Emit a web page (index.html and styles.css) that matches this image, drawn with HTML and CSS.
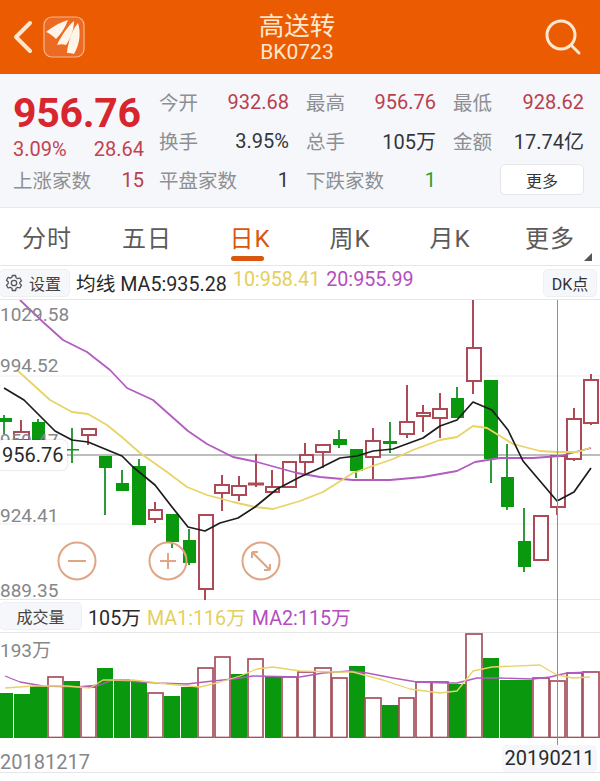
FILE: index.html
```html
<!DOCTYPE html>
<html lang="zh-CN">
<head>
    <meta charset="UTF-8">
    <meta name="viewport" content="width=device-width, initial-scale=1.0">
    <title>高送转 BK0723</title>
    <link rel="stylesheet" href="styles.css">
</head>
<body>
    <header class="topbar">
        <div class="topbar-left">
            <svg class="back-icon" width="22" height="34" viewBox="0 0 22 34">
                <path d="M18 3 L4 17 L18 31" fill="none" stroke="#fde7cf" stroke-width="4" stroke-linecap="round" stroke-linejoin="round"/>
            </svg>
            <svg class="logo-icon" width="42" height="42" viewBox="0 0 42 42">
                <rect x="1" y="1" width="40" height="40" rx="8" fill="#ec6a22" stroke="#f8b78c" stroke-width="1.2"/>
                <path d="M3 16 C10 10 18 6 25 4 C22 12 18 18 13 23 C10 20 6 17 3 16 Z" fill="#fff4e8"/>
                <path d="M14 29 C18 20 25 10 31 5 C31 14 28 22 23 29 C20 28 17 28 14 29 Z" fill="#fff4e8"/>
                <path d="M24 37 C25 26 29 14 35 7 C38 16 37 28 31 38 C29 37 26 37 24 37 Z" fill="#fff4e8"/>
            </svg>
        </div>
        <div class="topbar-title">
            <div class="title-name">高送转</div>
            <div class="title-code">BK0723</div>
        </div>
        <svg class="search-icon" width="38" height="38" viewBox="0 0 38 38">
            <circle cx="17" cy="17" r="14" fill="none" stroke="#fde7cf" stroke-width="3"/>
            <path d="M27 27 L35 35" stroke="#fde7cf" stroke-width="3" stroke-linecap="round"/>
        </svg>
    </header>

    <section class="stats">
        <div class="price-block">
            <div class="price">956.76</div>
            <div class="price-change">
                <span>3.09%</span>
                <span>28.64</span>
            </div>
            <div class="stat"><span class="label">上涨家数</span><span class="value red">15</span></div>
        </div>
        <div class="stat-grid">
            <div class="stat"><span class="label">今开</span><span class="value red">932.68</span></div>
            <div class="stat"><span class="label">最高</span><span class="value red">956.76</span></div>
            <div class="stat"><span class="label">最低</span><span class="value red">928.62</span></div>
            <div class="stat"><span class="label">换手</span><span class="value">3.95%</span></div>
            <div class="stat"><span class="label">总手</span><span class="value">105万</span></div>
            <div class="stat"><span class="label">金额</span><span class="value">17.74亿</span></div>
            <div class="stat"><span class="label">平盘家数</span><span class="value">1</span></div>
            <div class="stat"><span class="label">下跌家数</span><span class="value green">1</span></div>
            <div class="stat"><button class="more-btn">更多</button></div>
        </div>
    </section>

    <nav class="tabs">
        <div class="tab tab-shift">分时</div>
        <div class="tab tab-shift">五日</div>
        <div class="tab active">日K</div>
        <div class="tab">周K</div>
        <div class="tab">月K</div>
        <div class="tab tab-more">更多</div>
    </nav>

    <div class="ma-row">
        <div class="chip chip-settings">
            <svg width="18" height="18" viewBox="0 0 18 18">
                <path d="M7.4 1.5 h3.2 l.5 2.3 1.5.9 2.3-.7 1.6 2.8-1.7 1.6 v1.2 l1.7 1.6-1.6 2.8-2.3-.7-1.5.9-.5 2.3 H7.4 l-.5-2.3-1.5-.9-2.3.7-1.6-2.8 1.7-1.6 V7.8 L1.5 6.2 l1.6-2.8 2.3.7 1.5-.9 Z" fill="none" stroke="#555" stroke-width="1.3" stroke-linejoin="round"/>
                <circle cx="9" cy="9" r="2.7" fill="none" stroke="#555" stroke-width="1.3"/>
            </svg>
            设置
        </div>
        <div class="ma-values">
            <span class="dark">均线 MA5:935.28</span>
            <span class="yellow">10:958.41</span>
            <span class="purple">20:955.99</span>
        </div>
        <div class="chip chip-dk">DK点</div>
    </div>

    <div class="kline">
        <svg class="kline-svg" width="600" height="300" viewBox="0 300 600 300">
            <g class="grid">
                <path d="M0 376 H600 M0 524 H600"/>
            </g>
            <path class="last-price" d="M0 455 H600"/>

            <g class="candles-down">
                <path class="wick" d="M4 415 V434 M38 419 V440 M72 428 V463 M105 456 V515 M122 470 V491 M139 459 V525 M172 514 V548 M189 529 V565 M339 430 V448 M356 449 V478 M390 422 V453 M457 387 V418 M491 380 V483 M507 444 V510 M524 508 V572"/>
                <rect x="-3" y="418" width="15" height="4"/>
                <rect x="32" y="422" width="13" height="18"/>
                <rect x="65" y="449" width="14" height="1.5"/>
                <rect x="99" y="456" width="13" height="12"/>
                <rect x="116" y="483" width="13" height="8"/>
                <rect x="132" y="466" width="14" height="59"/>
                <rect x="166" y="514" width="13" height="28"/>
                <rect x="183" y="540" width="13" height="23"/>
                <rect x="333" y="439" width="14" height="6"/>
                <rect x="350" y="449" width="13" height="22"/>
                <rect x="383" y="441" width="14" height="3"/>
                <rect x="451" y="398" width="13" height="20"/>
                <rect x="484" y="380" width="14" height="79"/>
                <rect x="501" y="477" width="13" height="30"/>
                <rect x="518" y="541" width="13" height="26"/>
            </g>

            <g class="candles-up">
                <path class="wick" d="M21 420 V440 M88 429 V445 M155 502 V523 M205 515 V600 M222 475 V511 M239 476 V501 M256 454 V487 M272 470 V493 M305 443 V475 M323 445 V468 M373 428 V480 M407 385 V438 M423 405 V432 M440 393 V438 M473 300 V394 M557 456 V515 M574 408 V461 M591 374 V425"/>
                <rect x="14" y="432" width="15" height="8"/>
                <rect x="82" y="429" width="14" height="6"/>
                <rect x="149" y="510" width="13" height="9"/>
                <rect x="199" y="515" width="14" height="74"/>
                <rect x="215" y="485" width="14" height="8"/>
                <rect x="232" y="486" width="14" height="9"/>
                <rect x="249" y="483.5" width="14" height="1"/>
                <rect x="266" y="487" width="13" height="5"/>
                <rect x="283" y="462" width="13" height="25"/>
                <rect x="300" y="455" width="13" height="7"/>
                <rect x="316" y="445" width="14" height="7"/>
                <rect x="366" y="441" width="14" height="16"/>
                <rect x="400" y="422" width="14" height="12"/>
                <rect x="417" y="413" width="13" height="3"/>
                <rect x="433" y="409" width="14" height="9"/>
                <rect x="467" y="348" width="14" height="33"/>
                <rect x="534" y="516" width="14" height="44"/>
                <rect x="551" y="456" width="14" height="51"/>
                <rect x="567" y="419" width="14" height="40"/>
                <rect x="584" y="380" width="14" height="43"/>
            </g>

            <polyline class="line-ma20" points="20,300 43,322 63,340 87,352 110,370 127,388 153,400 188,431 207,444 233,457 257,462 297,473 320,477 353,480 390,480 423,477 457,471 475,462 500,458 533,458 560,456 591,448"/>
            <polyline class="line-ma10" points="17,370 50,400 72,412 88,414 107,425 123,438 140,453 167,472 187,487 207,495 233,502 255,507 273,509 300,501 323,492 353,473 370,467 393,459 413,450 440,440 457,437 473,426 487,428 513,444 540,451 557,452 577,452 590,448"/>
            <polyline class="line-ma5" points="4,388 24,400 55,431 72,440 88,442 122,456 133,467 155,485 172,507 188,527 205,531 220,523 238,518 255,507 277,489 300,477 320,468 340,458 357,456 373,451 393,449 423,438 440,426 457,420 473,402 492,410 508,430 523,461 557,501 574,492 591,468"/>

            <g class="zoom-btn">
                <circle cx="77" cy="561" r="18.5"/>
                <path d="M68 561 H86"/>
                <circle cx="168" cy="561" r="18.5"/>
                <path d="M160 561 H176 M168 553 V569"/>
                <circle cx="261" cy="561" r="18.5"/>
                <path d="M252 552 L270 570 M252 552 h6 M252 552 v6 M270 570 h-6 M270 570 v-6"/>
            </g>
        </svg>
        <span class="axis-label axis-1">1029.58</span>
        <span class="axis-label axis-2">994.52</span>
        <span class="axis-label axis-mid">959.47</span>
        <span class="axis-label axis-3">924.41</span>
        <span class="axis-label axis-4">889.35</span>
        <span class="price-tag">956.76</span>
    </div>

    <div class="vol-row">
        <div class="chip chip-vol">成交量</div>
        <div class="ma-values">
            <span class="dark">105万</span>
            <span class="yellow">MA1:116万</span>
            <span class="purple">MA2:115万</span>
        </div>
    </div>

    <div class="volume">
        <svg class="volume-svg" width="600" height="105" viewBox="0 633 600 105">
            <g class="bars-down">
                <rect x="-1" y="693" width="14" height="45"/>
                <rect x="14" y="694" width="16" height="44"/>
                <rect x="30" y="686" width="17" height="52"/>
                <rect x="64" y="681" width="16" height="57"/>
                <rect x="97" y="668" width="16" height="70"/>
                <rect x="114" y="679" width="16" height="59"/>
                <rect x="131" y="682" width="16" height="56"/>
                <rect x="164" y="696" width="16" height="42"/>
                <rect x="181" y="687" width="16" height="51"/>
                <rect x="231" y="674" width="16" height="64"/>
                <rect x="265" y="677" width="16" height="61"/>
                <rect x="349" y="666" width="16" height="72"/>
                <rect x="382" y="705" width="17" height="33"/>
                <rect x="449" y="684" width="17" height="54"/>
                <rect x="483" y="658" width="16" height="80"/>
                <rect x="500" y="680" width="16" height="58"/>
                <rect x="516" y="680" width="16" height="58"/>
            </g>
            <g class="bars-up">
                <rect x="48" y="677" width="15" height="60.5"/>
                <rect x="81" y="687" width="15" height="50.5"/>
                <rect x="148" y="693" width="15" height="44.5"/>
                <rect x="198" y="668" width="15" height="69.5"/>
                <rect x="215" y="657" width="15" height="80.5"/>
                <rect x="248" y="659" width="15" height="78.5"/>
                <rect x="282" y="677" width="15" height="60.5"/>
                <rect x="298" y="672" width="16" height="65.5"/>
                <rect x="315" y="668" width="16" height="69.5"/>
                <rect x="332" y="678" width="15" height="59.5"/>
                <rect x="365" y="698" width="16" height="39.5"/>
                <rect x="399" y="698" width="15" height="39.5"/>
                <rect x="416" y="682" width="15" height="55.5"/>
                <rect x="432" y="682" width="16" height="55.5"/>
                <rect x="466" y="634" width="16" height="103.5"/>
                <rect x="533" y="678" width="16" height="59.5"/>
                <rect x="550" y="681" width="15" height="56.5"/>
                <rect x="567" y="673" width="15" height="64.5"/>
                <rect x="583" y="672" width="16" height="65.5"/>
            </g>
            <polyline class="vol-ma2" points="5,676 20,682 43,686 77,687 100,685 113,680 157,683 187,684 213,681 233,679 253,676 300,677 323,673 350,671 367,673 393,678 417,682 447,683 457,683 477,678 500,678 533,679 550,677 567,673 590,672"/>
            <polyline class="vol-ma1" points="5,688 33,686 67,686 90,688 103,680 133,680 167,684 200,687 220,682 240,676 257,669 273,667 300,671 333,672 353,672 383,680 410,689 440,693 457,691 473,671 492,667 540,665 557,675 573,678 590,677"/>
        </svg>
        <span class="axis-label vol-max">193万</span>
    </div>

    <div class="dates">
        <span class="date-start">20181217</span>
        <span class="date-tag">20190211</span>
    </div>

    <div class="crosshair"></div>
</body>
</html>
```

FILE: styles.css
```css
* {
    box-sizing: border-box;
}
body {
    position: relative;
    margin: 0;
    width: 600px;
    height: 781px;
    overflow: hidden;
    background-color: white;
    font-family: Roboto, "Noto Sans CJK SC", sans-serif;
}

/* top bar */
.topbar {
    display: grid;
    grid-template-columns: 1fr auto 1fr;
    align-items: center;
    height: 74px;
    padding: 0 18px 0 12px;
    background-color: #eb5c02;
    color: #fde7cf;
}
.topbar-left {
    display: flex;
    align-items: center;
    gap: 9px;
}
.topbar-title {
    text-align: center;
}
.title-name {
    font-size: 25.5px;
    line-height: 30px;
}
.title-code {
    font-size: 21px;
    line-height: 23px;
}
.search-icon {
    justify-self: end;
}

/* stats */
.stats {
    display: flex;
    height: 134px;
    padding: 0 16px 0 13px;
    background-color: #f5f7fa;
    border-bottom: 1px solid #e6e8ea;
}
.price-block {
    width: 131px;
    flex: none;
}
.price {
    height: 56px;
    padding-top: 11px;
    font-size: 41px;
    line-height: 56px;
    font-weight: 700;
    color: #d8262f;
    letter-spacing: -0.3px;
}
.price-change {
    display: flex;
    justify-content: space-between;
    height: 31px;
    margin-top: 4px;
    font-size: 20px;
    line-height: 31px;
    color: #c2434f;
}
.stat-grid {
    display: grid;
    grid-template-columns: 130px 130px 131px;
    grid-auto-rows: 39px;
    column-gap: 17px;
    margin-left: 15px;
    padding-top: 8px;
}
.stat {
    display: flex;
    align-items: center;
    justify-content: space-between;
    height: 39px;
}
.price-block .stat {
    margin-top: -5px;
}
.label {
    font-size: 19.5px;
    color: #8d8f92;
}
.value {
    font-size: 20px;
    color: #33363a;
}
.red {
    color: #b8404e;
}
.green {
    color: #2f9a3a;
}
.more-btn {
    margin-left: auto;
    width: 84px;
    height: 31px;
    padding: 0;
    border: 1px solid #e4e6e9;
    border-radius: 5px;
    background-color: white;
    font-family: inherit;
    font-size: 16px;
    color: #33363a;
}

/* period tabs */
.tabs {
    display: flex;
    height: 58px;
    border-bottom: 1px solid #e6e6e6;
}
.tab {
    position: relative;
    flex: 1;
    padding-top: 11px;
    text-align: center;
    font-size: 24px;
    line-height: 40px;
    letter-spacing: 1px;
    color: #5b5b5b;
}
.tab-shift {
    text-indent: -6px;
}
.tab.active {
    color: #d9560f;
}
.tab.active::after {
    content: "";
    position: absolute;
    left: 31px;
    bottom: 4px;
    width: 33px;
    height: 5px;
    border-radius: 3px;
    background-color: #d9560f;
}
.tab-more::after {
    content: "";
    position: absolute;
    right: 8px;
    bottom: 4px;
    border-left: 8px solid transparent;
    border-bottom: 8px solid #555;
}

/* indicator rows */
.ma-row,
.vol-row {
    display: flex;
    align-items: center;
    height: 34px;
    border-bottom: 1px solid #e6e6e6;
}
.chip {
    display: flex;
    align-items: center;
    justify-content: center;
    gap: 6px;
    height: 28px;
    background-color: #f5f7fa;
    border: 1px solid #eef0f2;
    border-radius: 5px;
    font-size: 16px;
    color: #444;
}
.chip-settings {
    width: 71px;
    margin-left: -1px;
    padding-right: 3px;
}
.chip-dk {
    width: 54px;
    margin-left: auto;
    margin-right: 3px;
    color: #333;
}
.chip-vol {
    width: 83px;
    margin-left: -1px;
}
.ma-values {
    display: flex;
    gap: 6px;
    margin-left: 6px;
    font-size: 19.7px;
    white-space: nowrap;
}
.dark {
    color: #2a2a2a;
}
.yellow {
    color: #e5cf5c;
}
.purple {
    color: #b54dc0;
}

/* k-line chart */
.kline {
    position: relative;
    height: 300px;
    border-bottom: 1px solid #e6e6e6;
}
.kline-svg,
.volume-svg {
    display: block;
}
.grid path {
    stroke: #efefef;
    fill: none;
}
.last-price {
    stroke: #bdbdbd;
    stroke-width: 2;
    fill: none;
}
.wick {
    fill: none;
    stroke-width: 2;
}
.candles-down .wick {
    stroke: #2f9a3a;
}
.candles-down rect {
    fill: #0a980f;
}
.candles-up .wick {
    stroke: #ad4a55;
}
.candles-up rect {
    fill: white;
    stroke: #ad4a55;
    stroke-width: 2;
}
.line-ma5,
.line-ma10,
.line-ma20,
.vol-ma1,
.vol-ma2 {
    fill: none;
    stroke-linejoin: round;
}
.line-ma5 {
    stroke: #1c1c1c;
    stroke-width: 1.7;
}
.line-ma10 {
    stroke: #e8d366;
    stroke-width: 1.8;
}
.line-ma20 {
    stroke: #b25cc0;
    stroke-width: 1.8;
}
.zoom-btn circle,
.zoom-btn path {
    fill: none;
    stroke: #e0a585;
    stroke-width: 2;
}
.axis-label {
    position: absolute;
    left: 0;
    font-size: 19px;
    line-height: 22px;
    color: #85878a;
}
.axis-1 { top: 4px; }
.axis-2 { top: 55px; }
.axis-mid { top: 130px; }
.axis-3 { top: 205px; }
.axis-4 { top: 280px; }
.price-tag {
    position: absolute;
    left: -3px;
    top: 140px;
    width: 70px;
    height: 30px;
    padding-left: 5px;
    background-color: white;
    border-radius: 5px;
    box-shadow: 0 0 2px rgba(0,0,0,0.25);
    font-size: 20px;
    line-height: 30px;
    color: #2a2a2a;
}

/* volume */
.vol-row {
    height: 33px;
}
.volume {
    position: relative;
    height: 105px;
}
.bars-down rect {
    fill: #0a980f;
}
.bars-up rect {
    fill: white;
    stroke: #a5505c;
    stroke-width: 1.7;
}
.vol-ma1 {
    stroke: #e8d366;
    stroke-width: 1.3;
}
.vol-ma2 {
    stroke: #b25cc0;
    stroke-width: 1.3;
}
.vol-max {
    top: 7px;
}
.dates {
    position: relative;
    height: 35px;
    border-bottom: 1px solid #e6e6e6;
}
.date-start {
    position: absolute;
    left: 0;
    top: 13px;
    font-size: 20px;
    line-height: 22px;
    color: #85878a;
}
.date-tag {
    position: absolute;
    right: 3px;
    top: 7px;
    width: 95px;
    height: 27px;
    background-color: #f5f7fa;
    border-radius: 4px;
    text-align: center;
    font-size: 20px;
    line-height: 27px;
    color: #2a2a2a;
}
.crosshair {
    position: absolute;
    left: 557px;
    top: 300px;
    width: 1px;
    height: 445px;
    background-color: #8f8f8f;
}
```
